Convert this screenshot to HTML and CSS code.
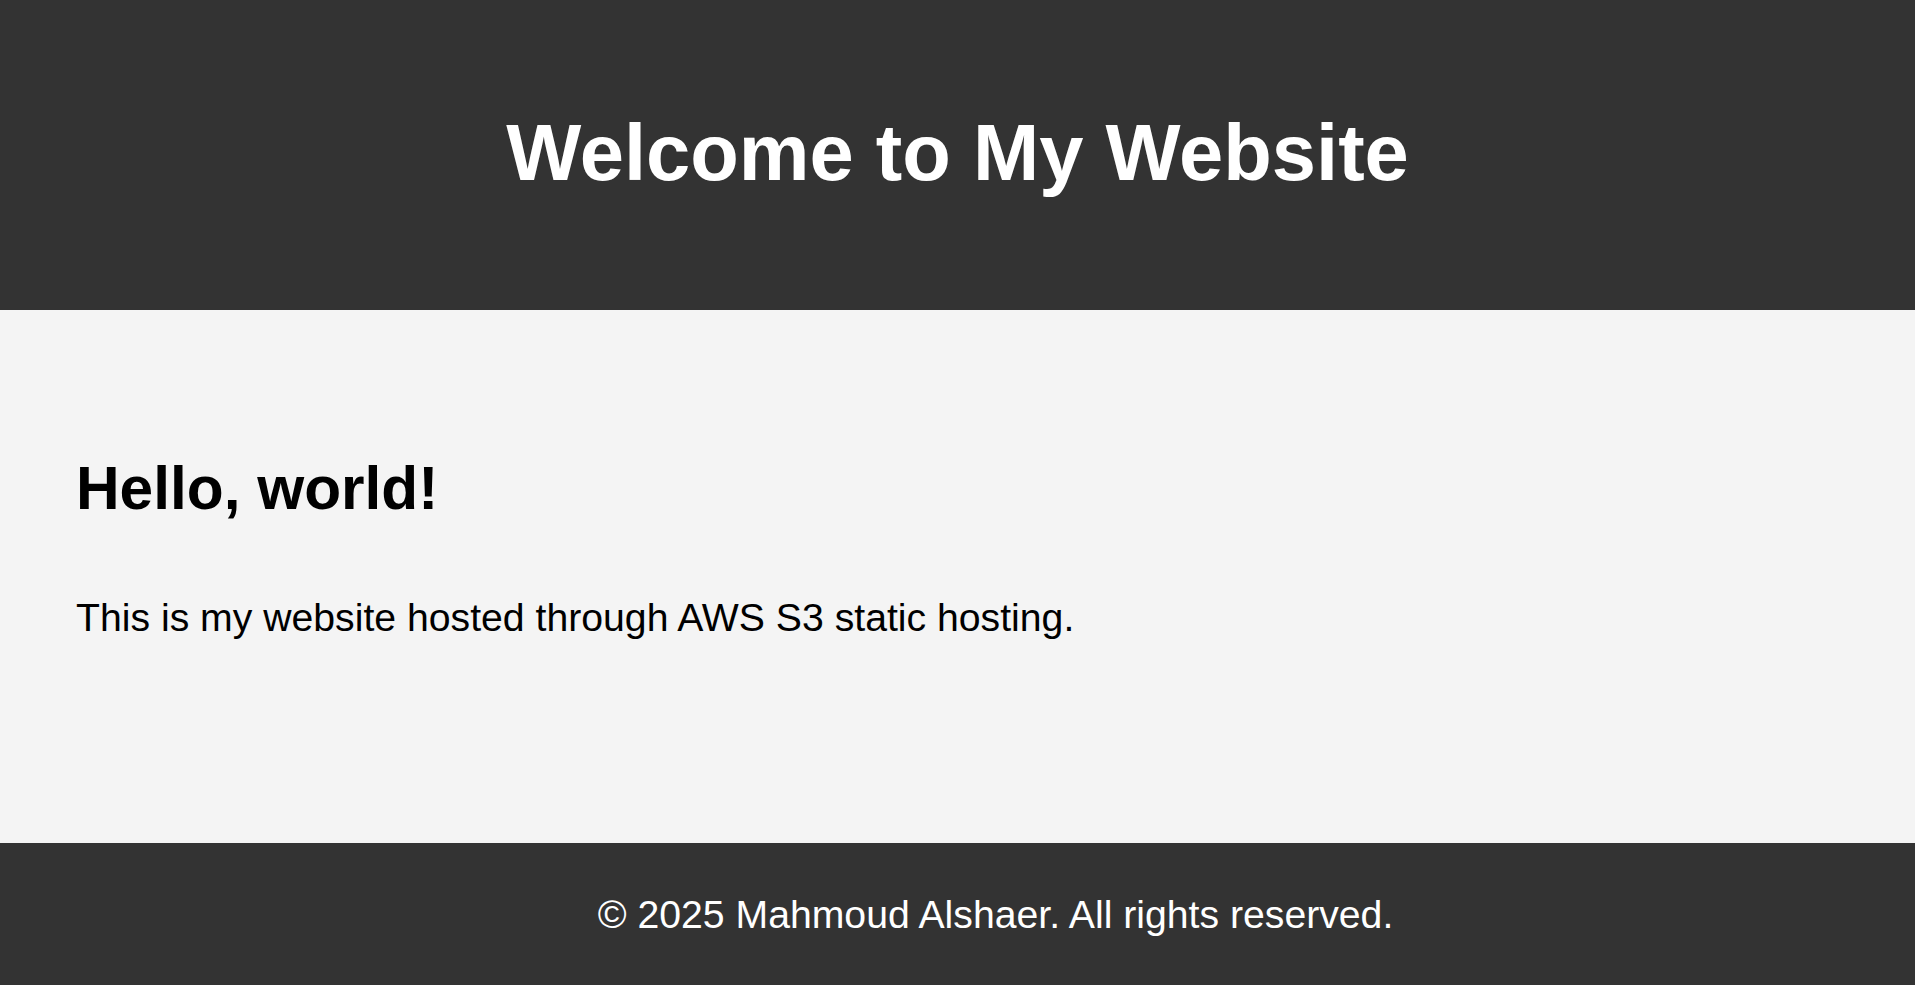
FILE: index.html
```html
<!DOCTYPE html>
<html lang="en">
<head>
<meta charset="utf-8">
<title>My Website</title>
<link rel="stylesheet" href="styles.css">
</head>
<body>
<div class="page">
  <header class="site-header">
    <h1 class="site-title">Welcome to My Website</h1>
  </header>
  <main class="content">
    <h2 class="greeting">Hello, world!</h2>
    <p class="intro">This is my website hosted through AWS S3 static hosting.</p>
  </main>
  <footer class="site-footer">
    <p class="copyright">&copy; 2025 Mahmoud Alshaer. All rights reserved.</p>
  </footer>
</div>
</body>
</html>
```

FILE: styles.css
```css
html, body {
  margin: 0;
  padding: 0;
}
body {
  font-family: "Liberation Sans", Arial, sans-serif;
  background: #f4f4f4;
  color: #000;
}
.page {
  display: flex;
  flex-direction: column;
  min-height: 985px;
}
.site-header {
  background: #333333;
  color: #ffffff;
  height: 310px;
  box-sizing: border-box;
  padding-top: 107px;
  text-align: center;
}
.site-title {
  margin: 0;
  font-size: 79.5px;
  line-height: 92px;
  font-weight: bold;
}
.content {
  flex: 1;
  background: #f4f4f4;
  padding: 144px 76px 0 76px;
}
.greeting {
  margin: 0;
  font-size: 60.4px;
  line-height: 69px;
  font-weight: bold;
}
.intro {
  margin: 72px 0 0 0;
  font-size: 39.2px;
  line-height: 45px;
}
.site-footer {
  background: #333333;
  color: #ffffff;
  height: 142px;
  box-sizing: border-box;
  padding: 49px 0 0 76px;
  text-align: center;
}
.copyright {
  margin: 0;
  font-size: 39.2px;
  line-height: 45px;
}
```
